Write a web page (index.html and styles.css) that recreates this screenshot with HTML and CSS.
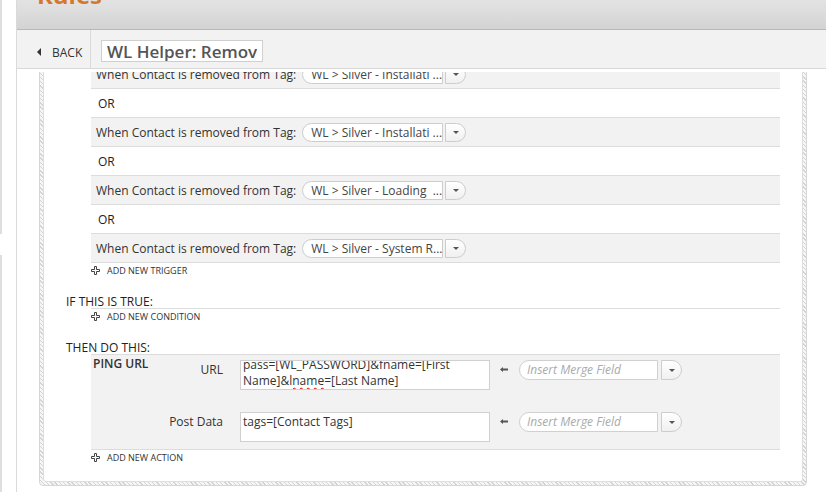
FILE: index.html
```html
<!DOCTYPE html>
<html lang="en">
<head>
<meta charset="utf-8">
<title>Rules</title>
<link rel="stylesheet" href="styles.css">
</head>
<body>
<div class="page">
  <aside class="edge">
    <div class="edge-bar edge-bar-top"></div>
    <div class="edge-bar edge-bar-bottom"></div>
  </aside>
  <div class="main">
    <header class="header"><h1 class="title">Rules</h1></header>
    <div class="toolbar">
      <a class="back"><span class="back-arrow"></span>BACK</a>
      <div class="name-cell"><input class="name-input" type="text" value="WL Helper: Remove Tags for Cancellations"></div>
    </div>
    <div class="viewport">
      <div class="frame">
        <div class="frame-inner">
          <div class="rows">
            <div class="row">
              <span class="row-label">When Contact is removed from Tag:</span>
              <div class="select"><span class="select-value">WL &gt; Silver - Installati ...</span><span class="select-btn"><span class="caret"></span></span></div>
            </div>
            <div class="or">OR</div>
            <div class="row">
              <span class="row-label">When Contact is removed from Tag:</span>
              <div class="select"><span class="select-value">WL &gt; Silver - Installati ...</span><span class="select-btn"><span class="caret"></span></span></div>
            </div>
            <div class="or">OR</div>
            <div class="row">
              <span class="row-label">When Contact is removed from Tag:</span>
              <div class="select"><span class="select-value">WL &gt; Silver - Loading&nbsp; ...</span><span class="select-btn"><span class="caret"></span></span></div>
            </div>
            <div class="or">OR</div>
            <div class="row">
              <span class="row-label">When Contact is removed from Tag:</span>
              <div class="select"><span class="select-value">WL &gt; Silver - System R...</span><span class="select-btn"><span class="caret"></span></span></div>
            </div>
          </div>
          <a class="add"><svg class="plus" width="9" height="9" viewBox="0 0 9 9"><path d="M3.5 0.5H5.5V3.5H8.5V5.5H5.5V8.5H3.5V5.5H0.5V3.5H3.5Z" fill="#fff" stroke="#444" stroke-width="1"/></svg>ADD NEW TRIGGER</a>

          <h2 class="section">IF THIS IS TRUE:</h2>
          <div class="conditions"></div>
          <a class="add"><svg class="plus" width="9" height="9" viewBox="0 0 9 9"><path d="M3.5 0.5H5.5V3.5H8.5V5.5H5.5V8.5H3.5V5.5H0.5V3.5H3.5Z" fill="#fff" stroke="#444" stroke-width="1"/></svg>ADD NEW CONDITION</a>

          <h2 class="section">THEN DO THIS:</h2>
          <div class="action">
            <div class="action-name">PING URL</div>
            <div class="fields">
              <div class="field">
                <span class="field-label">URL</span>
                <div class="textarea"><div class="ta-text ta-scrolled">pass=[WL_PASSWORD]&amp;fname=[First Name]&amp;<span class="misspelled">lname</span>=[Last Name]</div></div>
                <svg class="arrow-icon" width="8" height="5" viewBox="0 0 8 5"><path d="M0 2.5L3 0V1.5H8V3.5H3V5Z" fill="#555"/></svg>
                <div class="merge"><span class="merge-input">Insert Merge Field</span><span class="merge-btn"><span class="caret"></span></span></div>
              </div>
              <div class="field">
                <span class="field-label">Post Data</span>
                <div class="textarea"><div class="ta-text ta-top">tags=[Contact Tags]</div></div>
                <svg class="arrow-icon" width="8" height="5" viewBox="0 0 8 5"><path d="M0 2.5L3 0V1.5H8V3.5H3V5Z" fill="#555"/></svg>
                <div class="merge"><span class="merge-input">Insert Merge Field</span><span class="merge-btn"><span class="caret"></span></span></div>
              </div>
            </div>
          </div>
          <a class="add"><svg class="plus" width="9" height="9" viewBox="0 0 9 9"><path d="M3.5 0.5H5.5V3.5H8.5V5.5H5.5V8.5H3.5V5.5H0.5V3.5H3.5Z" fill="#fff" stroke="#444" stroke-width="1"/></svg>ADD NEW ACTION</a>
        </div>
      </div>
    </div>
  </div>
</div>
</body>
</html>
```
FILE: styles.css
```css
html, body {
  margin: 0;
  height: 492px;
  overflow: hidden;
  background: #fff;
}
body {
  font-family: "Open Sans", "Noto Sans", sans-serif;
  font-size: 12px;
  color: #333;
}
.page {
  display: flex;
  height: 492px;
}
.edge {
  flex: 0 0 16px;
  display: flex;
  flex-direction: column;
}
.edge-bar {
  width: 2px;
  background: #dedede;
}
.edge-bar-top {
  height: 234px;
}
.edge-bar-bottom {
  margin-top: 21px;
  flex: 1;
}
.main {
  flex: 1;
  min-width: 0;
  border-left: 1px solid #dadada;
  display: flex;
  flex-direction: column;
}
.header {
  height: 29px;
  border-bottom: 1px solid #b8b8b8;
  background: linear-gradient(#e3e3e3, #d3d3d3);
  overflow: hidden;
  padding-left: 20px;
}
.title {
  margin: -17px 0 0;
  font-size: 24px;
  line-height: 24px;
  font-weight: 700;
  color: #d6782a;
}
.toolbar {
  height: 38px;
  background: #f2f2f2;
  border-bottom: 1px solid #d8d8d8;
  margin-bottom: 3px;
  display: flex;
}
.back {
  flex: 0 0 74px;
  box-sizing: border-box;
  border-right: 1px solid #dadada;
  display: flex;
  align-items: center;
  padding: 6px 0 0 20px;
  font-size: 12px;
  color: #333;
}
.back-arrow {
  width: 0;
  height: 0;
  border-right: 4px solid #333;
  border-top: 4px solid transparent;
  border-bottom: 4px solid transparent;
  margin-right: 11px;
}
.name-cell {
  padding: 10px 0 0 10px;
}
.name-input {
  display: block;
  width: 162px;
  height: 22px;
  box-sizing: border-box;
  border: 1px solid #cfcfcf;
  padding: 0 5px;
  margin: 0;
  font-family: "Open Sans", sans-serif;
  font-weight: 600;
  font-size: 17px;
  color: #555;
  background: #fff;
  outline: none;
}
.viewport {
  flex: 1;
  overflow: hidden;
}
.frame {
  margin: -40px 19px 0 22px;
  border: 1px solid #d6d6d6;
  border-radius: 4px;
  padding: 3px;
  background: repeating-linear-gradient(45deg, #d4d4d4 0 1px, #f6f6f6 1px 3px);
}
.frame-inner {
  background: #fff;
  border: 1px solid #dedede;
  border-radius: 3px;
  padding: 22px 22px 17px 22px;
}
.rows {
  margin-left: 25px;
}
.row {
  height: 28px;
  background: #f2f2f2;
  border-top: 1px solid #dcdcdc;
  border-bottom: 1px solid #dcdcdc;
  display: flex;
  align-items: center;
  padding-left: 5px;
  color: #333;
}
.row-label {
  margin-right: 6px;
  white-space: nowrap;
}
.or {
  height: 28px;
  display: flex;
  align-items: center;
  padding-left: 7px;
  color: #222;
}
.select, .merge {
  display: flex;
  gap: 2px;
}
.merge {
  gap: 3px;
}
.select-value {
  width: 141px;
  height: 19px;
  box-sizing: border-box;
  border: 1px solid #cdcdcd;
  border-radius: 10px 0 0 10px;
  background: #fff;
  padding-left: 8px;
  line-height: 17px;
  color: #444;
  white-space: nowrap;
  overflow: hidden;
}
.select-btn, .merge-btn {
  width: 21px;
  height: 19px;
  box-sizing: border-box;
  border: 1px solid #cdcdcd;
  border-radius: 0 10px 10px 0;
  background: linear-gradient(#fff, #f0f0f0);
  display: flex;
  align-items: center;
  justify-content: center;
}
.merge-btn {
  height: 20px;
}
.caret {
  width: 0;
  height: 0;
  border-top: 3px solid #555;
  border-left: 3px solid transparent;
  border-right: 3px solid transparent;
  margin-top: 1px;
}
.add {
  display: flex;
  align-items: center;
  margin-left: 25px;
  height: 14px;
  font-size: 9px;
  color: #333;
  text-transform: uppercase;
}
.plus {
  margin-right: 7px;
  flex: 0 0 9px;
}
.section {
  margin: 18px 0 0;
  font-size: 12px;
  line-height: 13px;
  font-weight: 400;
  color: #222;
}
.conditions {
  margin-left: 25px;
  border-top: 1px solid #dcdcdc;
}
.action {
  margin-left: 25px;
  background: #f2f2f2;
  border-top: 1px solid #dcdcdc;
  border-bottom: 1px solid #dcdcdc;
  display: flex;
  padding: 5px 0 7px 2px;
}
.action-name {
  flex: 0 0 70px;
  font-weight: 600;
  line-height: 14px;
  margin-top: -3px;
  color: #333;
}
.fields {
  display: flex;
  flex-direction: column;
  gap: 22px;
}
.field {
  display: flex;
  align-items: flex-start;
}
.field-label {
  width: 60px;
  text-align: right;
  line-height: 14px;
  padding-top: 3px;
  margin-right: 17px;
  color: #333;
}
.textarea {
  width: 250px;
  height: 30px;
  box-sizing: border-box;
  border: 1px solid #d0d0d0;
  background: #fff;
  overflow: hidden;
  padding: 0 2px;
  line-height: 16px;
  color: #333;
}
.ta-scrolled {
  margin-top: -4px;
}
.ta-top {
  padding-top: 1px;
}
.misspelled {
  text-decoration: underline wavy #e00000;
  text-decoration-thickness: 1px;
  text-underline-offset: 2px;
}
.arrow-icon {
  margin: 7px 11px 0 10px;
  flex: 0 0 8px;
}
.merge-input {
  width: 139px;
  height: 20px;
  box-sizing: border-box;
  border: 1px solid #d0d0d0;
  border-radius: 10px 0 0 10px;
  background: #fff;
  padding-left: 7px;
  line-height: 18px;
  font-style: italic;
  color: #aaa;
  white-space: nowrap;
}
```
